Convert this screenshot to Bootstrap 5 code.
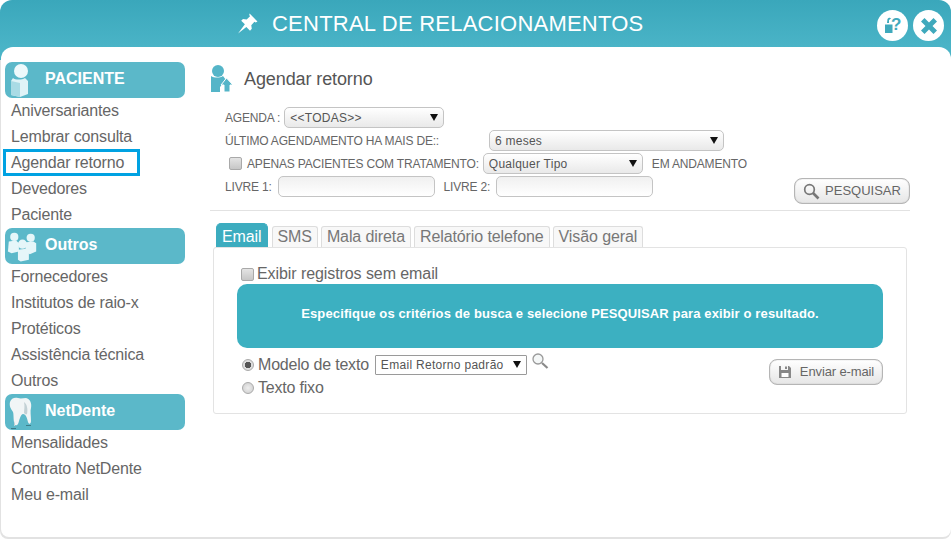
<!DOCTYPE html>
<html lang="pt-BR">
<head>
<meta charset="utf-8">
<title>Central de Relacionamentos</title>
<link href="https://cdn.jsdelivr.net/npm/bootstrap@5.3.0/dist/css/bootstrap.min.css" rel="stylesheet">
<style>
html,body{height:100%;margin:0;overflow:hidden;background:#fff}
body{font-family:"Liberation Sans",Arial,sans-serif;color:#666}
.app-shell{width:951px;height:539px;border-radius:12px 12px 8px 8px;background:linear-gradient(#3aa7bb 0,#4ab4c7 47px,#4ab4c7 60px,#e2e2e2 60px);padding:0 0 2px 1px;display:flex;flex-direction:column}
.app-head{height:47px;flex:none;color:#fff;font-size:22px;letter-spacing:.23px;position:relative}
.head-title{gap:14px;height:47px;padding-left:236px}
.head-btns{position:absolute;top:10px;left:876px;gap:5px}
.round-btn{width:31px;height:31px;border-radius:50%;background:#fff;border:0;padding:0;display:flex;align-items:center;justify-content:center}
.app-body{flex:1;background:#fff;border-radius:12px 12px 8px 8px;display:flex;min-height:0}
.side-col{width:209px;flex:none;padding:15px 0 0 4px}
.side-head{width:180px;height:36px;background:#5bb8c9;border-radius:7px;color:#fff;font-weight:700;font-size:16px;display:flex;align-items:center;position:relative;padding:0 0 2px 40px}
.side-head svg{position:absolute;left:2px;top:0}
.side-list{list-style:none;margin:0;padding:0}
.side-list a{display:block;height:26px;line-height:26px;padding-left:6px;font-size:16px;color:#666;text-decoration:none;letter-spacing:-.01em}
.side-list a.is-marked{width:137px;height:27px;margin:-1px 0 0 -2px;padding-left:5px;line-height:22px;border:3px solid #00a2e2;margin-bottom:0}
.main-col{flex:1;min-width:0;padding-top:15px}
.page-title{height:34px;gap:10px;font-size:18px;letter-spacing:-.1px;color:#555;margin-bottom:10px}
.search-form{font-size:12px;letter-spacing:-.18px;width:700px;padding-left:15px;position:relative;height:104px}
.form-line{height:23px;display:flex;align-items:center}
.fancy-sel,.fancy-inp{height:21px;border:1px solid #c4c4c4;border-radius:5px;font-family:inherit;font-size:12px;padding:0 5px;color:#555;letter-spacing:.25px;appearance:none;-webkit-appearance:none}
.fancy-sel{background:url("data:image/svg+xml,%3Csvg xmlns='http://www.w3.org/2000/svg' width='8' height='7'%3E%3Cpath d='M0 0h8L4 7z' fill='%23111'/%3E%3C/svg%3E") no-repeat right 5px center,linear-gradient(#fff,#e9e9e9)}
.fancy-inp{background:linear-gradient(#f0f0f0,#fff)}
.w-agenda{width:160px;margin-left:4px}
.w-meses{width:235px;margin-left:50px}
.w-tipo{width:160px;margin-left:4px}
.w-andam{margin-left:9px}
.w-livre{width:157px;margin-left:6px}
.w-livre2{margin-left:9px}
.w-livre3{margin-left:6px}
.cb-box{width:13px;height:13px;border:1px solid #a9a9a9;border-radius:2px;background:linear-gradient(#e4e4e4,#c6c6c6);margin:0;flex:none;appearance:none;-webkit-appearance:none;display:block}
.cb-apenas{margin:0 5px 0 4px}
.gray-btn{border:1px solid #b5b5b5;border-radius:8px;background:linear-gradient(#fff,#e6e6e6);color:#666;display:flex;align-items:center;justify-content:center;box-shadow:0 0 1px #999 inset}
.btn-search{position:absolute;left:584px;top:72px;width:116px;height:26px;font-size:13px;letter-spacing:0;gap:5px;padding:0}
.btn-send{width:114px;height:26px;font-size:13px;letter-spacing:-.12px;gap:8px;padding:0}
.sep-line{width:700px;border-top:1px solid #e2e2e2;margin:0}
.tab-row{display:flex;gap:3px;padding-left:6px;margin-top:12px;height:24px;align-items:flex-end;letter-spacing:-.1px}
.tab-item{height:21px;line-height:19px;padding:0 5px;font-size:16px;border:1px solid #ddd;border-bottom:0;border-radius:3px 3px 0 0;background:#f8f8f8;color:#777;text-decoration:none;display:block}
.tab-item.is-on{height:24px;line-height:26px;background:#3cacbf;border-color:#3cacbf;color:#fff;border-radius:5px 5px 0 0;margin-right:1px}
.tab-pane-box{width:694px;height:167px;margin-left:3px;border:1px solid #e3e3e3;border-radius:3px;padding:17px 23px 0 23px}
.check-line{height:18px;gap:3px;font-size:16px;letter-spacing:-.08px;margin-left:4px}
.info-box{height:64px;margin-top:1px;background:#3cb0c1;border-radius:10px;color:#fff;font-weight:700;font-size:13px;letter-spacing:.13px;display:flex;align-items:center;justify-content:center;padding-bottom:4px}
.tpl-row{display:flex;justify-content:space-between;margin-top:5px}
.tpl-left{font-size:16px;letter-spacing:-.2px;margin-left:5px}
.radio-line{display:flex;align-items:center;gap:4px;height:23px}
.radio-dot{width:12px;height:12px;border-radius:50%;border:1px solid #aaa;background:radial-gradient(#eee,#ccc);flex:none;appearance:none;-webkit-appearance:none;margin:0;display:block}
.radio-dot:checked{background:radial-gradient(circle,#555 0,#555 3px,#ddd 3.5px)}
.model-select{width:152px;height:20px;margin-left:2px;border:1px solid #9a9a9a;border-radius:1px;font-family:inherit;color:#555;font-size:12px;padding:0 5px;letter-spacing:.3px;appearance:none;-webkit-appearance:none;background:url("data:image/svg+xml,%3Csvg xmlns='http://www.w3.org/2000/svg' width='8' height='7'%3E%3Cpath d='M0 0h8L4 7z' fill='%23111'/%3E%3C/svg%3E") no-repeat right 5px center,#fff}
.btn-send-wrap{padding-top:6px}
</style>
</head>
<body>
<div class="app-shell">
  <header class="app-head">
    <div class="head-title d-flex align-items-center">
      <svg width="21" height="21" viewBox="0 0 20 20" aria-hidden="true"><path fill="#fff" d="M12 .5l7.500 7.500-1.700 1.100-1.200-.7-3 3.200.5 3.500-1.700 1.700-3.500-3.500L1 19.500 7.500 10.800 4 7.300l1.700-1.700 3.500.5 3.200-3-.7-1.300z"/></svg>
      <span>CENTRAL DE RELACIONAMENTOS</span>
    </div>
    <div class="head-btns d-flex">
      <button class="round-btn" type="button" aria-label="Ajuda">
        <svg width="22" height="22" viewBox="0 0 22 22"><path fill="#3fa9bc" d="M3 9.500h7.500V18H3zM5.500 4c1-1.500 3-1.500 3.500-.5L7 5v3H5z"/><text x="9" y="15" font-family="Liberation Sans" font-weight="700" font-size="17" fill="#3fa9bc" stroke="#fff" stroke-width="1.200" paint-order="stroke">?</text></svg>
      </button>
      <button class="round-btn" type="button" aria-label="Fechar">
        <svg width="20" height="20" viewBox="0 0 20 20"><path fill="#3fa9bc" d="M5.500 2L10 6.500 14.500 2 18 5.500 13.500 10 18 14.500 14.500 18 10 13.500 5.500 18 2 14.500 6.500 10 2 5.500z"/></svg>
      </button>
    </div>
  </header>
  <div class="app-body">
    <aside class="side-col">
      <div class="side-head">
        <svg width="26" height="36" viewBox="0 0 26 36"><path fill="#dff3f7" d="M6 16c2 2 9 2 12 0l3 3v13l-8 3-9-2V19z"/><path fill="#a9dbe5" d="M4 19l9 2v14l-9-2z"/><circle cx="14" cy="9" r="7" fill="#eef9fb"/></svg>
        <span>PACIENTE</span>
      </div>
      <ul class="side-list">
        <li><a href="#">Aniversariantes</a></li>
        <li><a href="#">Lembrar consulta</a></li>
        <li><a href="#" class="is-marked">Agendar retorno</a></li>
        <li><a href="#">Devedores</a></li>
        <li><a href="#">Paciente</a></li>
      </ul>
      <div class="side-head">
        <svg width="31" height="36" viewBox="0 0 34 36"><g fill="#e6f6f9"><circle cx="8" cy="8" r="4.500"/><path d="M2 13l8-1 3 3v9l-8 2-4-2z"/><circle cx="26" cy="9" r="4.500"/><path d="M21 14l8-1 3 2v9l-7 3-5-3z"/><circle cx="17" cy="16" r="5"/><path d="M12 22l9-1 3 3v9l-9 2-3-2z"/></g></svg>
        <span>Outros</span>
      </div>
      <ul class="side-list">
        <li><a href="#">Fornecedores</a></li>
        <li><a href="#">Institutos de raio-x</a></li>
        <li><a href="#">Protéticos</a></li>
        <li><a href="#">Assistência técnica</a></li>
        <li><a href="#">Outros</a></li>
      </ul>
      <div class="side-head">
        <svg width="28" height="36" viewBox="0 0 28 36"><path fill="#f1f5f6" d="M3 8c1-4 5-5 8-4 3 1 5 0 8 0 4 1 6 5 5 10-1 3 0 8 0 13 0 3-2 4-3 1-1-4-2-8-5-8-2 0-3 4-4 7-1 4-2 5-4 4-2-4-1-10-2-13C4 15 2 12 3 8z"/><path fill="#c3d1d5" d="M17 8c3 2 4 7 3 12-1 1-2 0-3-1 0-3 1-7 0-11zM7 27c1 2 1 4 1 5h-1z"/><path fill="#3c7c88" d="M4 34h5v1H4zM19 31h5v1h-5z"/></svg>
        <span>NetDente</span>
      </div>
      <ul class="side-list">
        <li><a href="#">Mensalidades</a></li>
        <li><a href="#">Contrato NetDente</a></li>
        <li><a href="#">Meu e-mail</a></li>
      </ul>
    </aside>
    <main class="main-col">
      <div class="page-title d-flex align-items-center">
        <svg width="24" height="28" viewBox="0 0 24 28" aria-hidden="true"><g fill="#54b5c8"><circle cx="8" cy="6" r="6"/><path d="M1 11c3 2 9 2 12 0l3 4-6 7v5H1z"/><path d="M16.500 13l6.500 7h-3v7h-6v-7h-3z" stroke="#fff"/></g></svg>
        <span>Agendar retorno</span>
      </div>
      <form class="search-form" onsubmit="return false">
        <div class="form-line"><span>AGENDA :</span><select class="fancy-sel w-agenda"><option>&lt;&lt;TODAS&gt;&gt;</option></select></div>
        <div class="form-line"><span>ÚLTIMO AGENDAMENTO HA MAIS DE::</span><select class="fancy-sel w-meses"><option>6 meses</option></select></div>
        <div class="form-line"><input class="cb-box cb-apenas" type="checkbox"><span>APENAS PACIENTES COM TRATAMENTO:</span><select class="fancy-sel w-tipo"><option>Qualquer Tipo</option></select><span class="w-andam">EM ANDAMENTO</span></div>
        <div class="form-line"><span>LIVRE 1:</span><input class="fancy-inp w-livre" type="text"><span class="w-livre2">LIVRE 2:</span><input class="fancy-inp w-livre w-livre3" type="text"></div>
        <button class="gray-btn btn-search" type="button">
          <svg width="17" height="17" viewBox="0 0 17 17"><circle cx="6.500" cy="6.500" r="4.800" fill="none" stroke="#777" stroke-width="1.700"/><path d="M10 10l5.500 5.500" stroke="#777" stroke-width="2.600"/></svg>
          PESQUISAR
        </button>
      </form>
      <hr class="sep-line opacity-100">
      <nav class="tab-row">
        <a class="tab-item is-on" href="#">Email</a>
        <a class="tab-item" href="#">SMS</a>
        <a class="tab-item" href="#">Mala direta</a>
        <a class="tab-item" href="#">Relatório telefone</a>
        <a class="tab-item" href="#">Visão geral</a>
      </nav>
      <section class="tab-pane-box">
        <label class="check-line d-flex align-items-center"><input class="cb-box" type="checkbox"><span>Exibir registros sem email</span></label>
        <div class="info-box">Especifique os critérios de busca e selecione PESQUISAR para exibir o resultado.</div>
        <div class="tpl-row">
          <div class="tpl-left">
            <div class="radio-line"><input class="radio-dot" type="radio" name="tpl" checked><span>Modelo de texto</span><select class="model-select"><option>Email Retorno padrão</option></select>
              <svg class="mb-2" width="18" height="18" viewBox="0 0 18 18"><circle cx="7" cy="7" r="5" fill="#f4f7f7" stroke="#9a9a9a" stroke-width="1.300"/><path d="M11 11l5.500 5" stroke="#8a8a8a" stroke-width="2.200"/></svg>
            </div>
            <div class="radio-line"><input class="radio-dot" type="radio" name="tpl"><span>Texto fixo</span></div>
          </div>
          <div class="btn-send-wrap">
            <button class="gray-btn btn-send" type="button">
              <svg width="14" height="14" viewBox="0 0 14 14"><path fill="#888" d="M1 1h2v4h7V1h1l2 2v10H1z"/><path fill="#fff" d="M3.500 8h7v4h-7z"/><path fill="#888" d="M7 1.500h2v2.500H7z"/></svg>
              Enviar e-mail
            </button>
          </div>
        </div>
      </section>
    </main>
  </div>
</div>
<script src="https://cdn.jsdelivr.net/npm/bootstrap@5.3.0/dist/js/bootstrap.bundle.min.js"></script>
</body>
</html>
